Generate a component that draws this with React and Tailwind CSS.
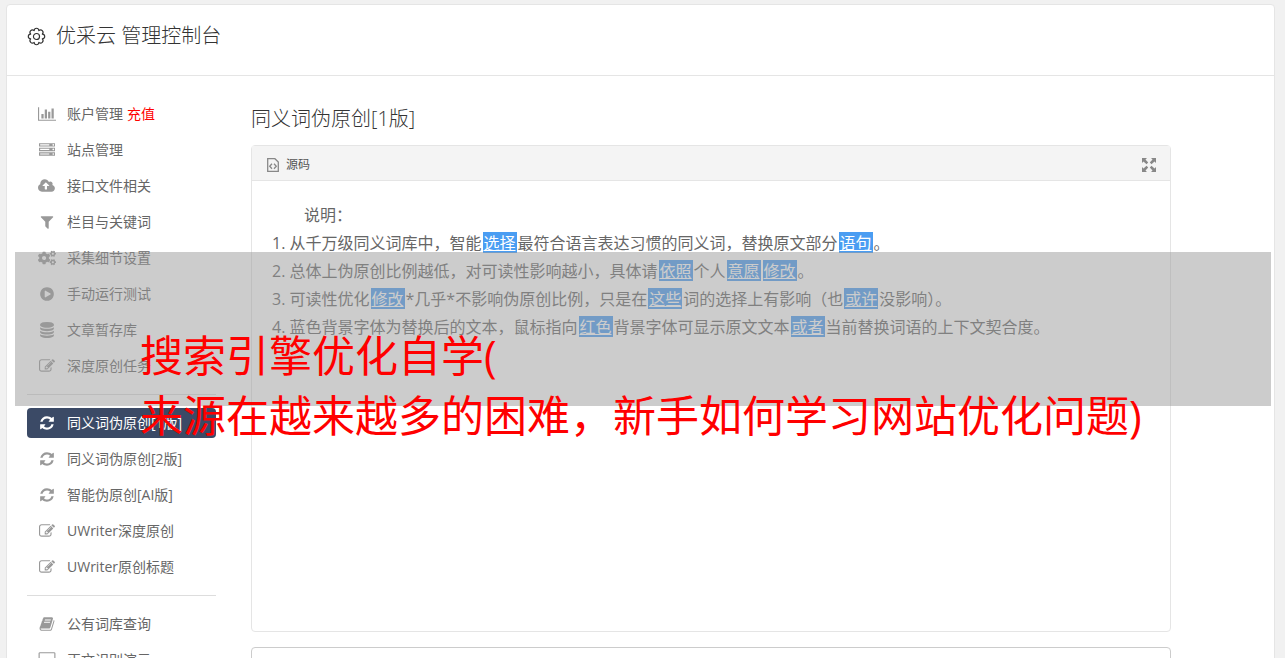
import React, { useState } from 'react';
import { FaCogs } from 'react-icons/fa';

const glyphs = {
  chart: 'M640 896v512h-256v-512h256zm384-512v1024h-256v-1024h256zm1024 1152v128h-2048v-1536h128v1408h1920zm-640-896v768h-256v-768h256zm384-384v1152h-256v-1152h256z',
  server: 'M128 1408h1024v-128h-1024v128zm0-512h1024v-128h-1024v128zm1568 448q0-40-28-68t-68-28-68 28-28 68 28 68 68 28 68-28 28-68zm-1568-960h1024v-128h-1024v128zm1568 448q0-40-28-68t-68-28-68 28-28 68 28 68 68 28 68-28 28-68zm0-512q0-40-28-68t-68-28-68 28-28 68 28 68 68 28 68-28 28-68zm96 832v384h-1792v-384h1792zm0-512v384h-1792v-384h1792zm0-512v384h-1792v-384h1792z',
  upload: 'M1280 864q0-14-9-23l-352-352q-9-9-23-9t-23 9l-351 351q-10 12-10 24 0 14 9 23t23 9h224v352q0 13 9.5 22.5t22.5 9.5h192q13 0 22.5-9.5t9.5-22.5v-352h224q13 0 22.5-9.5t9.5-22.5zm640 288q0 159-112.5 271.5t-271.5 112.5h-1088q-185 0-316.5-131.5t-131.5-316.5q0-130 70-240t188-165q-2-30-2-43 0-212 150-362t362-150q156 0 285.5 87t188.5 231q71-62 166-62 106 0 181 75t75 181q0 76-41 138 130 31 213.5 135.5t83.5 238.5z',
  filter: 'M1595 295q17 41-14 70l-493 493v742q0 42-39 59-13 5-25 5-27 0-45-19l-256-256q-19-19-19-45v-486l-493-493q-31-29-14-70 17-39 59-39h1280q42 0 59 39z',
  play: 'M896 128q209 0 385.5 103t279.5 279.5 103 385.5-103 385.5-279.5 279.5-385.5 103-385.5-103-279.5-279.5-103-385.5 103-385.5 279.5-279.5 385.5-103zm384 823q32-18 32-55t-32-55l-544-320q-31-19-64-1-32 19-32 56v640q0 37 32 56 16 8 32 8 17 0 32-9z',
  database: 'M896 768q237 0 443-43t325-127v170q0 69-103 128t-280 93.5-385 34.5-385-34.5-280-93.5-103-128v-170q119 84 325 127t443 43zm0 768q237 0 443-43t325-127v170q0 69-103 128t-280 93.5-385 34.5-385-34.5-280-93.5-103-128v-170q119 84 325 127t443 43zm0-384q237 0 443-43t325-127v170q0 69-103 128t-280 93.5-385 34.5-385-34.5-280-93.5-103-128v-170q119 84 325 127t443 43zm0-1152q208 0 385 34.5t280 93.5 103 128v128q0 69-103 128t-280 93.5-385 34.5-385-34.5-280-93.5-103-128v-128q0-69 103-128t280-93.5 385-34.5z',
  edit: 'M888 1184l116-116-152-152-116 116v56h96v96h56zm440-720q-16-16-33 1l-350 350q-17 17-1 33t33-1l350-350q17-17 1-33zm80 594v190q0 119-84.5 203.5t-203.5 84.5h-832q-119 0-203.5-84.5t-84.5-203.5v-832q0-119 84.5-203.5t203.5-84.5h832q63 0 117 25 15 7 18 23 3 17-9 29l-49 49q-14 14-32 8-23-6-45-6h-832q-66 0-113 47t-47 113v832q0 66 47 113t113 47h832q66 0 113-47t47-113v-126q0-13 9-22l64-64q15-15 35-7t20 29zm-96-738l288 288-672 672h-288v-288zm444 132l-92 92-288-288 92-92q28-28 68-28t68 28l152 152q28 28 28 68t-28 68z',
  refresh: 'M1639 1056q0 5-1 7-64 268-268 434.5t-478 166.5q-146 0-282.5-55t-243.5-157l-129 129q-19 19-45 19t-45-19-19-45v-448q0-26 19-45t45-19h448q26 0 45 19t19 45-19 45l-137 137q71 66 161 102t187 36q134 0 250-65t186-179q11-17 53-117 8-23 30-23h192q13 0 22.5 9.5t9.5 22.5zm25-800v448q0 26-19 45t-45 19h-448q-26 0-45-19t-19-45 19-45l138-138q-148-137-349-137-134 0-250 65t-186 179q-11 17-53 117-8 23-30 23h-199q-13 0-22.5-9.5t-9.5-22.5v-7q65-268 270-434.5t480-166.5q146 0 284 55.5t245 156.5l130-129q19-19 45-19t45 19 19 45z',
  book: 'M1703 478q40 57 18 129l-275 906q-19 64-76.5 107.5t-122.5 43.5h-923q-77 0-148.5-53.5t-99.5-131.5q-24-67-2-127 0-4 3-27t4-37q1-8-3-21.5t-3-19.5q2-11 8-21t16.5-23.5 16.5-23.5q23-38 45-91.5t30-91.5q3-10 .5-30t-.5-28q3-11 17-28t17-23q21-36 42-92t25-90q1-9-2.5-32t.5-28q4-13 22-30.5t22-22.5q19-26 42.5-84.5t27.5-96.5q1-8-3-25.5t-2-26.5q2-8 9-18t18-23 17-21q8-12 16.5-30.5t15-35 16-36 19.5-32 26.5-23.5 36-11.5 47.5 5.5l-1 3q38-9 51-9h761q74 0 114 56t18 130l-274 906q-36 119-71.5 153.5t-128.5 34.5h-869q-27 0-38 15-11 16-1 43 24 70 144 70h923q29 0 56-15.5t35-41.5l300-987q7-22 5-57 38 15 59 43zm-1064 2q-4 13 2 22.5t20 9.5h608q13 0 25.5-9.5t16.5-22.5l21-64q4-13-2-22.5t-20-9.5h-608q-13 0-25.5 9.5t-16.5 22.5zm-83 256q-4 13 2 22.5t20 9.5h608q13 0 25.5-9.5t16.5-22.5l21-64q4-13-2-22.5t-20-9.5h-608q-13 0-25.5 9.5t-16.5 22.5z',
  desktop: 'M1856 992v-832q0-13-9.5-22.5t-22.5-9.5h-1600q-13 0-22.5 9.5t-9.5 22.5v832q0 13 9.5 22.5t22.5 9.5h1600q13 0 22.5-9.5t9.5-22.5zm128-832v1088q0 66-47 113t-113 47h-544q0 37 16 77.5t32 71 16 43.5q0 26-19 45t-45 19h-512q-26 0-45-19t-19-45q0-14 16-44t32-70 16-78h-544q-66 0-113-47t-47-113v-1088q0-66 47-113t113-47h1600q66 0 113 47t47 113z',
};

// Glyphs that are wider than the 1792 em box
const wide = ['chart', 'upload', 'desktop'];

function Glyph({ name }) {
  if (name === 'cogs') return <FaCogs className="w-[18px] h-4" />;
  const isWide = wide.includes(name);
  return (
    <svg
      viewBox={isWide ? '0 0 2048 1792' : '0 0 1792 1792'}
      className={isWide ? 'w-[18px] h-4' : 'w-4 h-4'}
      fill="currentColor"
      aria-hidden="true"
    >
      <path d={glyphs[name]} />
    </svg>
  );
}

const menu = [
  [
    { icon: 'chart', label: '账户管理', extra: '充值' },
    { icon: 'server', label: '站点管理' },
    { icon: 'upload', label: '接口文件相关' },
    { icon: 'filter', label: '栏目与关键词' },
    { icon: 'cogs', label: '采集细节设置' },
    { icon: 'play', label: '手动运行测试' },
    { icon: 'database', label: '文章暂存库' },
    { icon: 'edit', label: '深度原创任务' },
  ],
  [
    { icon: 'refresh', label: '同义词伪原创[1版]' },
    { icon: 'refresh', label: '同义词伪原创[2版]' },
    { icon: 'refresh', label: '智能伪原创[AI版]' },
    { icon: 'edit', label: 'UWriter深度原创' },
    { icon: 'edit', label: 'UWriter原创标题' },
  ],
  [
    { icon: 'book', label: '公有词库查询' },
    { icon: 'desktop', label: '正文识别演示' },
  ],
];

// Replaced word inside the generated text
function Mark({ children }) {
  return <u className="inline-block h-[21px] mx-px px-px align-top mt-[3px] leading-[22px] bg-[#4a9df2] text-white underline">{children}</u>;
}

function GearIcon() {
  return (
    <svg viewBox="0 0 20 20" className="w-[19px] h-[19px] text-[#333]" fill="none" stroke="currentColor" strokeWidth="1.2" aria-hidden="true">
      <path
        strokeLinejoin="round"
        d="M7.5 3.9C7.7 .5 12.3 .5 12.5 3.9C15 1.6 18.4 5 16.1 7.5C19.5 7.7 19.5 12.3 16.1 12.5C18.4 15 15 18.4 12.5 16.1C12.3 19.5 7.7 19.5 7.5 16.1C5 18.4 1.6 15 3.9 12.5C.5 12.3 .5 7.7 3.9 7.5C1.6 5 5 1.6 7.5 3.9Z"
      />
      <circle cx="10" cy="10" r="3.2" />
    </svg>
  );
}

export default function App() {
  const [active, setActive] = useState('同义词伪原创[1版]');

  return (
    <div className="relative h-screen overflow-hidden bg-[#f1f1f1] pt-1 pl-1.5 pr-2.5 text-[#666] font-['Open_Sans','Noto_Sans_CJK_SC',sans-serif]">
      <div className="min-h-full bg-white border border-[#e5e5e5] rounded">
        <header className="flex items-center gap-2.5 h-[71px] pl-5 pb-2 border-b border-[#e5e5e5] text-[#333]">
          <GearIcon />
          <h1 className="text-xl leading-7 font-light">优采云 管理控制台</h1>
        </header>

        <div className="flex pl-5 gap-[35px]">
          <nav className="w-[189px] shrink-0 pt-[23px] text-sm">
            {menu.map((group, idx) => (
              <ul key={idx} className={idx > 0 ? 'flex flex-col gap-1.5 mt-[13px] pt-[13px] border-t border-[#ddd]' : 'flex flex-col gap-1.5'}>
                {group.map((item) => (
                  <li key={item.label}>
                    <a
                      href="#"
                      onClick={() => setActive(item.label)}
                      className={`flex items-center h-[30px] pl-2.5 rounded ${active === item.label ? 'bg-[#3b4a66] text-white' : 'text-[#666]'}`}
                    >
                      <span className={`flex w-5 mr-2.5 justify-center ${active === item.label ? 'text-white' : 'text-[#999]'}`}>
                        <Glyph name={item.icon} />
                      </span>
                      {item.label}
                      {item.extra && <span className="ml-1 text-[#f00]">{item.extra}</span>}
                    </a>
                  </li>
                ))}
              </ul>
            ))}
          </nav>

          <main className="flex-1 pt-[29px] pr-[103px]">
            <h2 className="text-xl leading-7 font-light text-[#333]">同义词伪原创[1版]</h2>

            {/* Editor */}
            <section className="mt-3 border border-[#e5e5e5] rounded">
              <div className="flex items-center justify-between h-[35px] pt-[3px] pl-3.5 pr-3.5 bg-[#f4f4f4] border-b border-[#e5e5e5]">
                <button type="button" className="flex items-center gap-1.5 text-xs text-[#555]">
                  <svg viewBox="0 0 14 16" className="w-3.5 h-4 text-[#888]" fill="none" stroke="currentColor" strokeWidth="1.3" aria-hidden="true">
                    <path d="M1.7 1.7h7.2l3.4 3.4v9.2h-10.6zM6 6.8L3.7 9.3 6 11.8M8 6.8l2.3 2.5L8 11.8" />
                  </svg>
                  源码
                </button>
                <button type="button" aria-label="全屏" className="text-[#888]">
                  <svg viewBox="0 0 14 14" className="w-3.5 h-3.5" fill="currentColor" aria-hidden="true">
                    <path d="M0 0h5L3.5 1.5 6.2 4.5 4.5 6.2 1.5 3.5 0 5zM14 0v5l-1.5-1.5-3 2.7-1.7-1.7 2.7-3L9 0zM0 14V9l1.5 1.5 3-2.7 1.7 1.7-2.7 3L5 14zM14 14H9l1.5-1.5-2.7-3 1.7-1.7 3 2.7L14 9z" />
                  </svg>
                </button>
              </div>
              <div className="h-[450px] pt-5 pl-5 text-base leading-7">
                <p className="pl-8">说明：</p>
                <p>1. 从千万级同义词库中，智能<Mark>选择</Mark>最符合语言表达习惯的同义词，替换原文部分<Mark>语句</Mark>。</p>
                <p>2. 总体上伪原创比例越低，对可读性影响越小，具体请<Mark>依照</Mark>个人<Mark>意愿</Mark><Mark>修改</Mark>。</p>
                <p>3. 可读性优化<Mark>修改</Mark>*几乎*不影响伪原创比例，只是在<Mark>这些</Mark>词的选择上有影响（也<Mark>或许</Mark>没影响）。</p>
                <p>4. 蓝色背景字体为替换后的文本，鼠标指向<Mark>红色</Mark>背景字体可显示原文文本<Mark>或者</Mark>当前替换词语的上下文契合度。</p>
              </div>
            </section>

            <section className="mt-[15px] h-24 border border-[#ccc] rounded-sm"></section>
          </main>
        </div>
      </div>

      {/* Caption banner over the page */}
      <div className="absolute left-[15px] right-3.5 top-[252px] h-[154px] bg-[#999]/50"></div>
      <p className="absolute left-[140px] top-[326px] text-[43px] leading-[60px] whitespace-nowrap text-[#f00]">
        搜索引擎优化自学(<br />来源在越来越多的困难，新手如何学习网站优化问题)
      </p>
    </div>
  );
}
